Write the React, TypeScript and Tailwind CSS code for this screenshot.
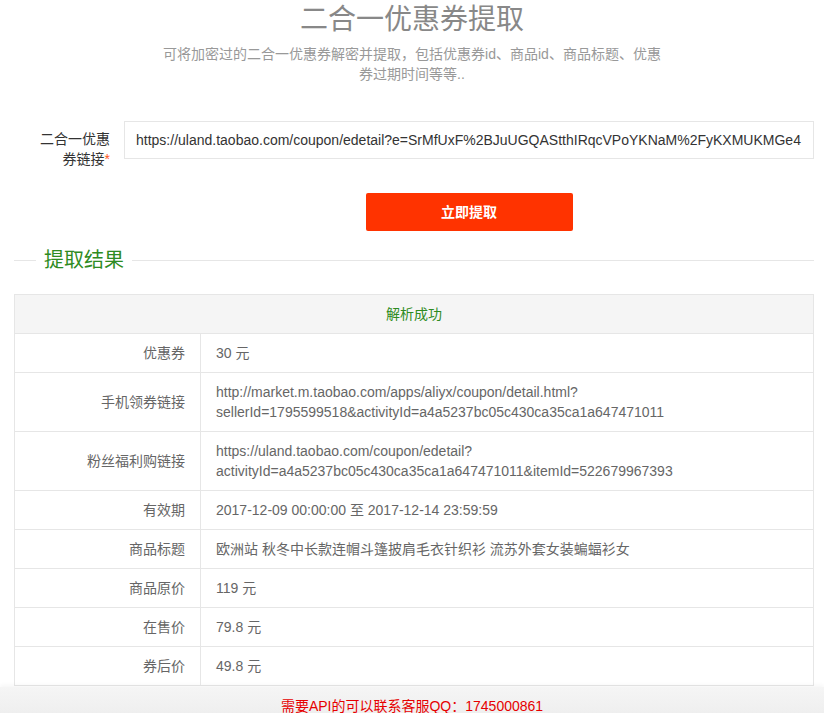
const rows = [
  { label: "优惠券", value: ["30 元"] },
  {
    label: "手机领券链接",
    value: [
      "http://market.m.taobao.com/apps/aliyx/coupon/detail.html?",
      "sellerId=1795599518&activityId=a4a5237bc05c430ca35ca1a647471011",
    ],
  },
  {
    label: "粉丝福利购链接",
    value: [
      "https://uland.taobao.com/coupon/edetail?",
      "activityId=a4a5237bc05c430ca35ca1a647471011&itemId=522679967393",
    ],
  },
  { label: "有效期", value: ["2017-12-09 00:00:00 至 2017-12-14 23:59:59"] },
  { label: "商品标题", value: ["欧洲站 秋冬中长款连帽斗篷披肩毛衣针织衫 流苏外套女装蝙蝠衫女"] },
  { label: "商品原价", value: ["119 元"] },
  { label: "在售价", value: ["79.8 元"] },
  { label: "券后价", value: ["49.8 元"] },
];

export default function App() {
  return (
    <div
      className="w-[824px] bg-white text-[14px] text-[#666]"
      style={{ fontFamily: '"Liberation Sans", "Noto Sans CJK SC", sans-serif' }}
    >
      {/* Header */}
      <div className="pt-[2px] text-center">
        <h1 className="text-[28px] leading-[36px] text-[#888]">二合一优惠券提取</h1>
        <p className="mx-auto mt-[6px] w-[510px] text-[14px] leading-[20px] text-[#999]">
          可将加密过的二合一优惠券解密并提取，包括优惠券id、商品id、商品标题、优惠券过期时间等等..
        </p>
      </div>

      {/* Form */}
      <div className="mt-[37px] flex pr-[10px]">
        <label className="w-[124px] shrink-0 pl-[38px] pr-[14px] pt-[8px] text-right leading-[20px] text-[#333]">
          二合一优惠券链接<span className="text-[#ff5722]">*</span>
        </label>
        <div className="flex-1 overflow-hidden">
          <div className="h-[38px] overflow-hidden whitespace-nowrap border border-[#e6e6e6] pl-[11px] leading-[36px] text-[#333]">
            https://uland.taobao.com/coupon/edetail?e=SrMfUxF%2BJuUGQAStthIRqcVPoYKNaM%2FyKXMUKMGe4
          </div>
          <div className="mt-[34px] flex justify-center">
            <button className="h-[38px] w-[207px] rounded-[2px] bg-[#ff3300] text-[14px] font-bold text-white">
              立即提取
            </button>
          </div>
        </div>
      </div>

      {/* Legend */}
      <div className="ml-[14px] mr-[10px] mt-[9px] flex items-center">
        <div className="h-px w-[22px] bg-[#e6e6e6]" />
        <div className="px-[8px] text-[20px] leading-[40px] text-[#2e8b22]">提取结果</div>
        <div className="h-px flex-1 bg-[#e6e6e6]" />
      </div>

      {/* Result table */}
      <div className="ml-[14px] mr-[10px] mt-[14px] border border-[#e6e6e6]">
        <div className="bg-[#f5f5f5] py-[9px] text-center leading-[20px] text-[#2e8b22]">解析成功</div>
        {rows.map((r) => (
          <div key={r.label} className="flex border-t border-[#e6e6e6]">
            <div className="flex w-[186px] shrink-0 items-center justify-end border-r border-[#e6e6e6] px-[15px] py-[9px] leading-[20px]">
              {r.label}
            </div>
            <div className="flex-1 px-[15px] py-[9px] leading-[20px]">
              {r.value.map((v) => (
                <div key={v}>{v}</div>
              ))}
            </div>
          </div>
        ))}
      </div>

      {/* Footer */}
      <div className="mt-[1px] bg-gradient-to-b from-[#f5f5f5] to-[#ececec] py-[9px] text-center leading-[20px] text-[#e60000] shadow-[0_-2px_4px_rgba(0,0,0,0.04)]">
        需要API的可以联系客服QQ：1745000861
      </div>
    </div>
  );
}
